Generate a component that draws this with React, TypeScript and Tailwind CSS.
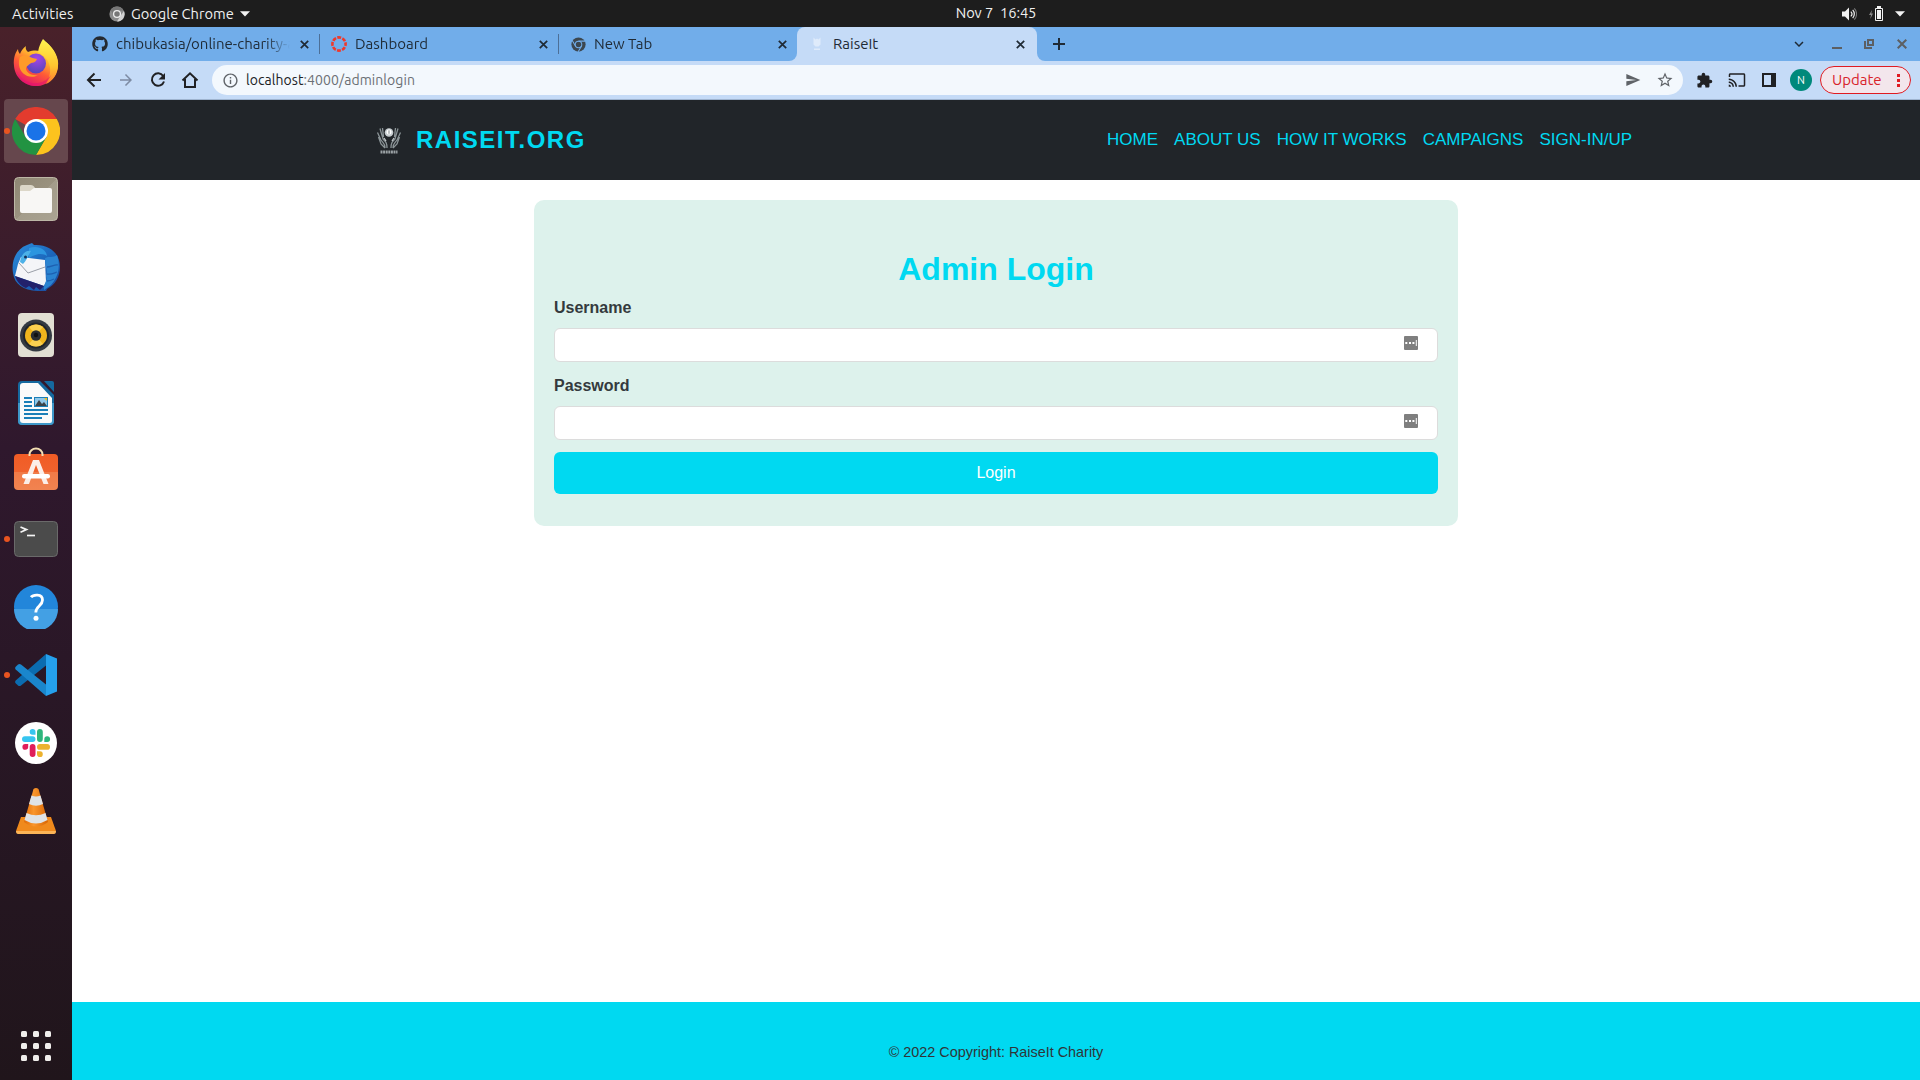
import React from "react";
import { FaGithub } from "react-icons/fa";
import {
  MdArrowForward,
  MdCast,
  MdExtension,
  MdKeyboardArrowDown,
  MdOutlineInfo,
  MdSend,
  MdStarBorder,
} from "react-icons/md";

function ChromeMono({ size, dark }: { size: number; dark?: boolean }) {
  const base = dark ? "#3c4750" : "#8c8c8c";
  const gap = dark ? "#71adea" : "#d8d8d8";
  return (
    <svg width={size} height={size} viewBox="0 0 16 16">
      <circle cx="8" cy="8" r="7.6" fill={base} />
      {dark ? (
        <g stroke={gap} strokeWidth="1.1" fill="none">
          <path d="M8 4.4h7.4M4.9 9.8 1.2 3.4M11.1 9.8 7.5 16" />
          <circle cx="8" cy="8" r="3.5" />
        </g>
      ) : (
        <>
          <path d="M8 15.6 11.4 10 15 5a7.6 7.6 0 0 1-7 10.6z" fill="#d2d2d2" />
          <path d="M1.5 4A7.6 7.6 0 0 1 14.6 4.4H8L4.6 9z" fill="#777" />
          <circle cx="8" cy="8" r="3.4" fill="#777" stroke="#eee" strokeWidth="1.3" />
        </>
      )}
    </svg>
  );
}

function CloseGlyph({ className }: { className?: string }) {
  return (
    <svg className={className} width="9" height="9" viewBox="0 0 9 9">
      <path d="m.8.8 7.400 7.400M8.200.8.800 8.200" stroke="#1f2a35" strokeWidth="1.700" />
    </svg>
  );
}

function TopBar() {
  return (
    <div className="grid h-[27px] shrink-0 grid-cols-[1fr_auto_1fr] items-center bg-[#1d1d1d] text-[14.667px] leading-[26px] text-[#f0f0f0]">
      <div className="flex items-center pl-3">
        <span className="w-[97px] tracking-[0.15px]">Activities</span>
        <ChromeMono size={16} />
        <span className="ml-[6px] w-[105px] whitespace-nowrap">Google Chrome</span>
        <svg className="ml-[4px]" width="10" height="6" viewBox="0 0 10 6">
          <path d="M0 .3h10L5 5.6z" fill="#f2f2f2" />
        </svg>
      </div>
      <div className="flex w-[79px] translate-x-[36px] justify-center gap-[7px] whitespace-nowrap -mt-px tracking-[-0.1px]">
        <span>Nov 7</span>
        <span>16:45</span>
      </div>
      <div className="flex items-center justify-end pr-[15px]">
        <svg width="15" height="14" viewBox="0 0 15 14">
          <path d="M0 4.5h3L7 .5v13l-4-4H0z" fill="#f2f2f2" />
          <path d="M8.8 4.6a3.4 3.4 0 0 1 0 4.8M10.7 2.9a6 6 0 0 1 0 8.2" stroke="#f2f2f2" strokeWidth="1.2" fill="none" />
          <path d="M12.3 1.4a8 8 0 0 1 0 11.2" stroke="#777" strokeWidth="1.1" fill="none" />
        </svg>
        <svg className="ml-[12px]" width="15" height="16" viewBox="0 0 15 16">
          <path d="M3 4 0 9h2L1.300 13 4 7.600H2.300z" fill="#8a8a8a" />
          <path d="M6.500 2.500h7v12h-7z" fill="none" stroke="#f2f2f2" />
          <path d="M8 0h4v2H8zM8 4h4v9H8z" fill="#f2f2f2" />
        </svg>
        <svg className="ml-[11px]" width="10" height="6" viewBox="0 0 10 6">
          <path d="M0 .3h10L5 5.600z" fill="#f2f2f2" />
        </svg>
      </div>
    </div>
  );
}

function Firefox() {
  return (
    <svg width="46" height="48" viewBox="0 0 46 48">
      <defs>
        <linearGradient id="ffBody" x1=".8" y1=".05" x2=".3" y2="1">
          <stop offset="0" stopColor="#fff44f" />
          <stop offset=".35" stopColor="#ffb52e" />
          <stop offset=".62" stopColor="#ff5a36" />
          <stop offset="1" stopColor="#e3126f" />
        </linearGradient>
        <radialGradient id="ffGlobe" cx=".55" cy=".25" r=".8">
          <stop offset="0" stopColor="#a545e8" />
          <stop offset="1" stopColor="#5046b4" />
        </radialGradient>
        <linearGradient id="ffTail" x1="0" y1="0" x2="0" y2="1">
          <stop offset="0" stopColor="#fff44f" />
          <stop offset=".6" stopColor="#ffc52f" />
          <stop offset="1" stopColor="#ff7a30" />
        </linearGradient>
      </defs>
      <path d="M1 27C0 18 3 13 5 10c0 2 1 4 2 5 1-3 3-6 6-8-1 3 1 5 2 6 8-3 13-1 15 2 5-2 4-9 3-12 9 7 13 17 12 24-1 12-11 20-22 20S2 39 1 27z" fill="url(#ffBody)" />
      <path d="M30 0c5 5 15 13 15 26 0 9-5 16-12 19 4-7 6-15 2-23-2-4-7-7-10-9 1-6 3-10 5-13z" fill="url(#ffTail)" />
      <circle cx="23" cy="24.500" r="10" fill="url(#ffGlobe)" />
      <path d="M7 18c3-2 6-2 9-1 2 2 5 2 8 3-1 3-4 4-6 4-2 2-5 3-5 6 1 4 6 7 12 6-8 5-18-1-19-10-.3-3 0-6 1-8z" fill="#ff9a29" />
      <path d="M3 31c4 10 13 14 22 13 6-1 10-4 13-8-3 8-9 11-15 11C12 47 5 40 3 31z" fill="#e3126f" opacity=".55" />
    </svg>
  );
}

function Chrome() {
  return (
    <svg width="48" height="48" viewBox="0 0 48 48">
      <path d="M24 24 3.200 12A24 24 0 0 1 44.800 12z" fill="#e33b2e" />
      <path d="M24 12h20.800A24 24 0 0 1 24 48l10.400-18z" fill="#fcc31e" />
      <path d="M13.600 30 3.200 12A24 24 0 0 0 24 48l10.400-18z" fill="#229342" />
      <circle cx="24" cy="24" r="12" fill="#fff" />
      <circle cx="24" cy="24" r="9.500" fill="#1a73e8" />
    </svg>
  );
}

function Files() {
  return (
    <svg width="44" height="44" viewBox="0 0 44 44">
      <defs>
        <linearGradient id="fileBg" x1="0" y1="0" x2="1" y2="1">
          <stop offset="0" stopColor="#8f8774" />
          <stop offset=".5" stopColor="#9a927f" />
          <stop offset=".5" stopColor="#a39c8a" />
          <stop offset="1" stopColor="#aaa392" />
        </linearGradient>
      </defs>
      <rect x=".5" y=".5" width="43" height="43" rx="4" fill="url(#fileBg)" stroke="#bdb7a6" />
      <path d="M6 10q0-2 2-2h9q2 0 3 1.500L21 11h5v8H6z" fill="#dcd7c8" />
      <path d="M6 14h10l4-3h16q2 0 2 2v21q0 2-2 2H8q-2 0-2-2z" fill="#f8f7f5" />
    </svg>
  );
}

function Thunderbird() {
  return (
    <svg width="48" height="48" viewBox="0 0 48 48">
      <defs>
        <linearGradient id="tbBlue" x1="0" y1="0" x2="1" y2="1">
          <stop offset="0" stopColor="#2c8fdd" />
          <stop offset=".5" stopColor="#1c68bd" />
          <stop offset="1" stopColor="#1b4699" />
        </linearGradient>
      </defs>
      <path d="M1 30C-1 18 4 6 15 2l5-2 2 2c15-1 26 8 26 22 0 10-5 18-13 22l-1 2C15 49 3 44 1 30z" fill="url(#tbBlue)" />
      <path d="M17 5c9-3 17 1 18 8-4-3-10-3-18 2z" fill="#2c95df" />
      <path d="m9 14 24 3 1 22-2 4L3 33l3-12z" fill="#f4f5f8" />
      <path d="m7 20 9 10 17-6" fill="none" stroke="#9a9fa8" strokeWidth="1" />
      <path d="M3 33 32 43l-4 4-4-3-2 3-5-4-3 2C9 43 5 39 3 33z" fill="#22216b" />
      <path d="M8 19c1-8 6-12 11-11-2 3-4 9-8 13z" fill="#4cb1e8" />
      <circle cx="13.500" cy="14" r="1.500" fill="#14305c" />
      <path d="M33 15c4-2 8 0 12-3 3 9 3 20-6 30l-7 5c-1-6 4-9 2-14 2-6-1-10-1-18z" fill="#2a83d0" />
      <path d="M35 24c4 0 8-3 11-2M35 31c4 1 7-1 10-2M35 38c3 0 5-1 7-2" stroke="#1d5fb0" strokeWidth="1.300" fill="none" />
    </svg>
  );
}

function Rhythmbox() {
  return (
    <svg width="36" height="44" viewBox="0 0 36 44">
      <rect width="36" height="44" rx="4" fill="#e2dfd3" />
      <circle cx="18" cy="22.500" r="16" fill="#343a42" />
      <circle cx="18" cy="22.500" r="13" fill="#20252b" />
      <circle cx="18" cy="22.500" r="11" fill="#f0b51d" />
      <path d="M11 31a11 11 0 0 0 14 0l-7-8zM11 14a11 11 0 0 1 14 0l-7 8z" fill="#f9d050" />
      <circle cx="18" cy="22.500" r="5.200" fill="#2a2d30" />
      <circle cx="18" cy="22" r="2.200" fill="#111" />
    </svg>
  );
}

function Writer() {
  return (
    <svg width="36" height="44" viewBox="0 0 36 44">
      <path d="M4 0h18l14 14v26q0 4-4 4H4q-4 0-4-4V4q0-4 4-4z" fill="#15699f" />
      <path d="M0 22h36v18q0 4-4 4H4q-4 0-4-4z" fill="#3e98c9" />
      <path d="M26 0h8q2 0 2 2v9z" fill="#15699f" />
      <path d="M5 2h15l14 15v23q0 2-2 2H5q-3 0-3-3V5q0-3 3-3z" fill="#fafafa" />
      <path d="M6 16h8v2H6zM6 20h8v2H6zM6 24h8v2H6zM6 28h24v2H6zM6 32h24v2H6zM6 36h18v2H6z" fill="#1b7fb8" />
      <path d="M16 16h14v10H16z" fill="#1b7fb8" />
      <path d="M17 17h12v8H17z" fill="#8fc7e8" />
      <path d="m17 25 4-6 3 4 2-2 3 4z" fill="#3c4348" />
      <path d="M26 17h3v3z" fill="#f4be1c" />
    </svg>
  );
}

function Software() {
  return (
    <svg className="mb-[4px]" width="44" height="44" viewBox="0 0 44 44">
      <defs>
        <linearGradient id="swBg" x1="0" y1="0" x2="0" y2="1">
          <stop offset="0" stopColor="#f15c25" />
          <stop offset=".5" stopColor="#f0622d" />
          <stop offset=".5" stopColor="#f17a47" />
          <stop offset="1" stopColor="#f18350" />
        </linearGradient>
      </defs>
      <rect y="7" width="44" height="36" rx="4" fill="url(#swBg)" />
      <path d="M15.500 9V7.500a6.500 6 0 0 1 13 0V9" fill="none" stroke="#f3dfb2" strokeWidth="2" />
      <path d="M19 13h6l9.500 24h-5L22 18l-7 19h-5.500z" fill="#fbeee8" />
      <rect x="8" y="27" width="28" height="4.500" rx="2.200" fill="#fff" />
    </svg>
  );
}

function Terminal() {
  return (
    <svg width="44" height="36" viewBox="0 0 44 36">
      <rect x=".5" y=".5" width="43" height="35" rx="4" fill="#4b4b4b" stroke="#6a6a6a" />
      <path d="m6.500 6 6 2.600-6 2.600" fill="none" stroke="#f4f4f4" strokeWidth="1.700" />
      <path d="M13 14.500h8" stroke="#f4f4f4" strokeWidth="1.700" />
    </svg>
  );
}

function Help() {
  return (
    <svg width="44" height="44" viewBox="0 0 44 44">
      <circle cx="22" cy="22" r="22" fill="#2286da" />
      <path d="M0 24a22 22 0 0 0 44 0z" fill="#43a0e4" />
      <path d="M17 12.200c2-2.600 11.500-4 11.500 2.800 0 6-6.700 6.200-6.700 12.500" fill="none" stroke="#fff" strokeWidth="2.800" />
      <circle cx="22" cy="33.300" r="2.500" fill="#fff" />
    </svg>
  );
}

function VsCode() {
  return (
    <svg width="42" height="42" viewBox="0 0 42 42">
      <path d="M31 0v11.500L6 31.500q-1.500 1-3 0L.7 29.300q-1.200-1.300 0-2.700z" fill="#0b6cb0" />
      <path d="M31 42V30.500L6 10.500q-1.500-1-3 0L.7 12.700q-1.200 1.300 0 2.700z" fill="#1a86cc" />
      <path d="M31 0 42 4.500v33L31 42z" fill="#25a0ec" />
    </svg>
  );
}

function Slack() {
  return (
    <svg width="42" height="42" viewBox="0 0 42 42">
      <circle cx="21" cy="21" r="21" fill="#fff" />
      <g fill="#36c5f0">
        <rect x="7" y="14.200" width="13.500" height="5.800" rx="2.900" />
        <path d="M20.500 12.800h-3a2.900 2.900 0 1 1 3-3z" />
      </g>
      <g fill="#2eb67d">
        <rect x="22" y="7" width="5.800" height="13" rx="2.900" />
        <path d="M29.300 20v-3a2.900 2.900 0 1 1 3 3z" />
      </g>
      <g fill="#ecb22e">
        <rect x="22" y="22" width="13" height="5.800" rx="2.900" />
        <path d="M22 29.300h3a2.900 2.900 0 1 1-3 3z" />
      </g>
      <g fill="#e01e5a">
        <rect x="14.700" y="22" width="5.800" height="13" rx="2.900" />
        <path d="M13.200 22v3a2.900 2.900 0 1 1-3-3z" />
      </g>
    </svg>
  );
}

function Vlc() {
  return (
    <svg width="40" height="46" viewBox="0 0 40 46">
      <defs>
        <linearGradient id="cone" x1="0" y1="0" x2="1" y2="0">
          <stop offset="0" stopColor="#e06c08" />
          <stop offset=".4" stopColor="#f9962c" />
          <stop offset="1" stopColor="#d86504" />
        </linearGradient>
      </defs>
      <path d="M5 29h30l5 14q0 2-2 2H2q-2 0-2-2z" fill="#f08a1c" />
      <path d="M0 43h40q0 3-2 3H2q-2 0-2-3z" fill="#fbb457" />
      <path d="M17.500 1q2.500-2 5 0L32 34q-12 9-24 0z" fill="url(#cone)" />
      <path d="m15.500 7.500q4.500 1.800 9 0L27 16q-7 3.500-14 0zM10.500 25q9.500 4.500 19 0l2 7q-11.500 7-23 0z" fill="#dfe3e6" />
    </svg>
  );
}

const dock = [
  { name: "Firefox", icon: <Firefox /> },
  { name: "Chrome", icon: <Chrome />, running: true, active: true },
  { name: "Files", icon: <Files /> },
  { name: "Thunderbird", icon: <Thunderbird /> },
  { name: "Rhythmbox", icon: <Rhythmbox /> },
  { name: "Writer", icon: <Writer /> },
  { name: "Software", icon: <Software /> },
  { name: "Terminal", icon: <Terminal />, running: true },
  { name: "Help", icon: <Help /> },
  { name: "Code", icon: <VsCode />, running: true },
  { name: "Slack", icon: <Slack /> },
  { name: "VLC", icon: <Vlc /> },
];

function Dock() {
  return (
    <div className="flex w-[72px] shrink-0 flex-col bg-linear-to-b from-[#49212a] via-[#2f182d] via-40% to-[#20151b] px-1 pt-1">
      <div className="flex flex-col gap-1">
        {dock.map((d) => (
          <div
            key={d.name}
            className={
              d.active
                ? "relative flex size-16 items-center justify-center rounded-[4px] bg-[#66474d]"
                : "relative flex size-16 items-center justify-center"
            }
          >
            {d.running && <span className="absolute top-[29px] left-0 size-[6px] rounded-full bg-[#e95420]" />}
            {d.icon}
          </div>
        ))}
      </div>
      <div className="mt-auto mb-[19px] grid grid-cols-[6px_6px_6px] justify-center gap-[6px]">
        {Array.from({ length: 9 }, (_, i) => (
          <span key={i} className="size-[6px] rounded-[1.500px] bg-[#f0eeec]" />
        ))}
      </div>
    </div>
  );
}

function RaiseItLogo() {
  return (
    <svg width="26" height="29" viewBox="0 0 26 29">
      <g fill="none" stroke="#8b9497" strokeWidth="1.300">
        <path d="M9 22c0-5-2-5-4-8L1.500 6.500M17 22c0-5 2-5 4-8l3.500-7.500M11 22c0-5-1-6-4-9L4 2.500M15 22c0-5 1-6 4-9l3-10.500M2.500 11 5 18l4 4M23.500 11 21 18l-4 4M7.500 11 6.500 2M18.500 11l1-9" />
        <path d="M8 12l2 3M18 12l-2 3" stroke="#c3c9cb" />
      </g>
      <circle cx="13" cy="6.500" r="4.300" fill="#c5cccf" />
      <circle cx="13" cy="6" r="2.500" fill="#fff" />
      <path d="M13 4.300v3.500" stroke="#7b8487" />
      <path d="M4.500 26h17" stroke="#9aa1a4" strokeWidth="3" strokeDasharray="2 .6" />
    </svg>
  );
}

const tabs = [
  {
    title: "chibukasia/online-charity-app",
    icon: <FaGithub size={16} className="text-[#24292f]" />,
    box: "flex h-[20px] w-[236px] items-center border-r border-[#4c6f97] pr-[10px] pl-[8px]",
  },
  {
    title: "Dashboard",
    icon: (
      <svg width="16" height="16" viewBox="0 0 16 16">
        <circle cx="8" cy="8" r="6.600" fill="none" stroke="#f0382b" strokeWidth="2.600" strokeDasharray="3.900 1.283" strokeDashoffset="1.950" />
      </svg>
    ),
    box: "flex h-[20px] w-[239px] items-center border-r border-[#4c6f97] pr-[10px] pl-[11px]",
  },
  {
    title: "New Tab",
    icon: <ChromeMono size={15} dark />,
    box: "flex h-[20px] w-[230px] items-center pr-[2px] pl-[11px]",
  },
];

function TabStrip() {
  return (
    <div className="flex h-[34px] items-center bg-[#71adea] pl-[12px] text-[15px] text-[#1f2a35]">
      {tabs.map((t) => (
        <div key={t.title} className={t.box}>
          <span className="flex w-[16px] shrink-0 justify-center">{t.icon}</span>
          <span className="ml-[8px] w-[174px] shrink-0 overflow-hidden leading-[20px] whitespace-nowrap [mask-image:linear-gradient(to_right,black_86%,transparent_100%)]">
            {t.title}
          </span>
          <CloseGlyph className="ml-auto shrink-0" />
        </div>
      ))}
      <div className="flex h-full items-end">
        <div className="size-2 bg-[#c5dbf7]">
          <div className="size-2 rounded-br-[8px] bg-[#71adea]" />
        </div>
        <div className="flex h-full w-[240px] items-center rounded-t-[8px] bg-[#c5dbf7] pr-[12px] pl-[12px]">
          <svg width="16" height="16" viewBox="0 0 16 16">
            <path d="M4.500 1.500v7l2 2h3l2-2v-7l-2 2-1.500-1-1.500 1zM5 12.500h6v1.500H5z" fill="#dfebfb" />
          </svg>
          <span className="ml-[8px] leading-[20px]">RaiseIt</span>
          <CloseGlyph className="ml-auto" />
        </div>
        <div className="size-2 bg-[#c5dbf7]">
          <div className="size-2 rounded-bl-[8px] bg-[#71adea]" />
        </div>
      </div>
      <svg className="ml-[8px]" width="12" height="12" viewBox="0 0 12 12">
        <path d="M6 0v12M0 6h12" stroke="#1f2a35" strokeWidth="2" />
      </svg>
      <div className="ml-auto flex items-center">
        <MdKeyboardArrowDown size={18} className="mr-[24px]" />
        <svg className="mr-[22px]" width="10" height="10" viewBox="0 0 10 10">
          <path d="M0 8h10v2H0z" fill="#5c5f63" />
        </svg>
        <svg className="mr-[20px]" width="10" height="10" viewBox="0 0 10 10">
          <path d="M1 2v7h7M4 1h5v5H4z" fill="none" stroke="#5c5f63" strokeWidth="2" />
        </svg>
        <svg className="mr-[13px] ml-[3px]" width="10" height="10" viewBox="0 0 10 10">
          <path d="m.7.7 8.600 8.600M9.300.7.700 9.300" stroke="#5c5f63" strokeWidth="2" />
        </svg>
      </div>
    </div>
  );
}

function Toolbar() {
  return (
    <div className="flex h-[39px] items-center border-b border-[#9fb4cf] bg-[#c5dbf7] pl-[13px] text-[#202124]">
      <div className="flex gap-[14px]">
        <svg width="18" height="18" viewBox="0 0 18 18">
          <path d="M16 9H3.500M9.500 2.500 3 9l6.500 6.500" fill="none" stroke="currentColor" strokeWidth="2" />
        </svg>
        <MdArrowForward size={18} className="text-[#7d8ba3]" />
        <svg width="18" height="18" viewBox="0 0 18 18">
          <path d="M14.200 5A6.200 6.200 0 1 0 15 10.500" fill="none" stroke="currentColor" strokeWidth="2" />
          <path d="M16 2v6.500H9.500z" fill="currentColor" />
        </svg>
        <svg width="18" height="18" viewBox="0 0 18 18">
          <path d="M1.500 9.500 9 2.300l7.500 7.200M4 8v8h10V8" fill="none" stroke="currentColor" strokeWidth="2" />
        </svg>
      </div>
      <div className="ml-[13px] flex h-[30px] w-[1471px] items-center rounded-full bg-[#f3f8fd] pr-[9px] pl-[10px] text-[#5f6368]">
        <MdOutlineInfo size={17} />
        <span className="ml-[7px] text-[14px] tracking-[0.07px] text-[#6b6f74]">
          <span className="text-[#202124]">localhost</span>:4000/adminlogin
        </span>
        <MdSend size={16} className="ml-auto" />
        <MdStarBorder size={18} className="ml-[15px]" />
      </div>
      <div className="ml-[13px] flex items-center">
        <MdExtension size={17} />
        <MdCast size={18} className="ml-[15px]" />
        <svg className="ml-[16px]" width="14" height="14" viewBox="0 0 14 14">
          <path d="M0 0h14v14H0zM2 2v10h7V2z" fillRule="evenodd" fill="currentColor" />
        </svg>
        <span className="ml-[14px] flex size-[22px] items-center justify-center rounded-full bg-[#00897b] text-[11px] text-white">N</span>
        <span className="ml-[8px] flex h-[28px] w-[91px] items-center rounded-full border border-[#e01b22] bg-[#f3e6ec] pl-[11px] text-[15px] text-[#d8232a]">
          Update
          <svg className="mr-[10px] ml-auto" width="3" height="13" viewBox="0 0 3 13">
            <path d="M0 0h3v3H0zM0 5h3v3H0zM0 10h3v3H0z" fill="#e01b22" />
          </svg>
        </span>
      </div>
    </div>
  );
}

function Field({ label, type }: { label: string; type: string }) {
  return (
    <label className="mb-3 block">
      <span className="mb-2 block leading-6 font-bold text-[#343a3d]">{label}</span>
      <span className="flex h-[34px] items-start rounded-[6px] border border-[#dcdcdc] bg-white pr-[19px]">
        <input type={type} className="h-full min-w-0 flex-1 bg-transparent px-3 outline-none" />
        <svg className="mt-[7px]" width="14" height="14" viewBox="0 0 14 14">
          <rect width="14" height="14" rx="1" fill="#7f7f7f" />
          <path d="M1.300 6h2v2h-2zM5 6h2v2H5zM8.400 6h2v2h-2zM11.800 4h1v6h-1z" fill="#fff" />
        </svg>
      </span>
    </label>
  );
}

const links = ["HOME", "ABOUT US", "HOW IT WORKS", "CAMPAIGNS", "SIGN-IN/UP"];

function Page() {
  return (
    <div className="flex flex-1 flex-col bg-white font-['Liberation_Sans',Arial,sans-serif] text-[16px]">
      <header className="flex h-[80px] items-center bg-[#212529] pr-[288px] pl-[304px] text-[#00d9f1]">
        <RaiseItLogo />
        <span className="ml-[14px] text-[24px] font-bold tracking-[1.5px]">RAISEIT.ORG</span>
        <nav className="ml-auto flex gap-4 text-[17px]">
          {links.map((l) => (
            <a key={l}>{l}</a>
          ))}
        </nav>
      </header>
      <main className="flex flex-1 flex-col items-center pt-5">
        <form className="h-[326px] w-[924px] rounded-[10px] bg-[#ddf2ec] px-5 pt-[50px]">
          <h1 className="mb-2 text-center text-[32px] leading-[38px] font-bold text-[#00d9f1]">Admin Login</h1>
          <Field label="Username" type="text" />
          <Field label="Password" type="password" />
          <button type="button" className="block h-[42px] w-full rounded-[6px] bg-[#00d9f1] text-white">
            Login
          </button>
        </form>
      </main>
      <footer className="h-[78px] bg-[#00d9f1] pt-[40px] text-center text-[14.400px] leading-[20px] text-[#2f3538]">
        © 2022 Copyright: RaiseIt Charity
      </footer>
    </div>
  );
}

export default function App() {
  return (
    <div className="flex h-[1080px] w-[1920px] flex-col overflow-hidden font-['Ubuntu','Noto_Sans',sans-serif]">
      <TopBar />
      <div className="flex min-h-0 flex-1">
        <Dock />
        <div className="flex min-w-0 flex-1 flex-col">
          <TabStrip />
          <Toolbar />
          <Page />
        </div>
      </div>
    </div>
  );
}
